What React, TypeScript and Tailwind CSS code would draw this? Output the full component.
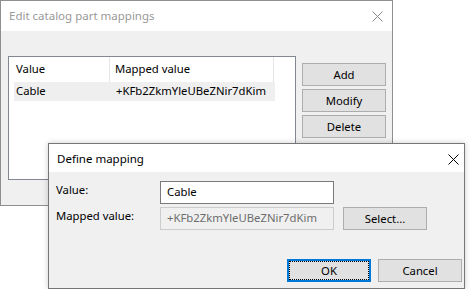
import React from "react";

function CloseIcon({ color }: { color: string }) {
  return (
    <svg width="11" height="11" viewBox="0 0 11 11" fill="none">
      <path d="M0.5 0.5 L10.5 10.5 M10.5 0.5 L0.5 10.5" stroke={color} strokeWidth="1" />
    </svg>
  );
}

function WinButton({ label, focused }: { label: string; focused?: boolean }) {
  if (focused) {
    return (
      <button className="relative w-[84px] h-[23px] bg-[#e1e1e1] border-2 border-[#0078d7] text-black leading-none">
        <span className="absolute inset-0 border border-dotted border-black" />
        {label}
      </button>
    );
  }
  return (
    <button className="w-[84px] h-[23px] bg-[#e1e1e1] border border-[#adadad] text-black leading-none">
      {label}
    </button>
  );
}

export default function App() {
  return (
    <div className="relative w-[470px] h-[289px] bg-white overflow-hidden text-[11.3px] font-['Noto_Sans',sans-serif] text-black">
      {/* back window */}
      <div className="absolute left-0 top-0 w-[393px] h-[206px] border border-[#8f8f8f] bg-[#f0f0f0] flex flex-col">
        <div className="h-[30px] bg-white flex items-center justify-between pl-2 pr-[9px] shrink-0">
          <span className="text-[#999999] text-[11.5px]">Edit catalog part mappings</span>
          <CloseIcon color="#8a8a8a" />
        </div>
        <div className="flex pl-[7px] pt-[25px]">
          <div className="w-[288px] h-[124px] border border-[#828790] bg-white pl-[5px]">
            <div className="flex h-[25px] items-center">
              <div className="w-[96px] h-full flex items-center pl-[2px] border-r border-[#e5e5e5]">Value</div>
              <div className="w-[164px] h-full flex items-center pl-[5px] border-r border-[#e5e5e5]">Mapped value</div>
            </div>
            <div className="flex h-[19px] items-center w-[261px] bg-[#efefef]">
              <div className="w-[96px] pl-[2px]">Cable</div>
              <div className="pl-[6px]">+KFb2ZkmYleUBeZNir7dKim</div>
            </div>
          </div>
          <div className="flex flex-col gap-[3px] ml-[6px] pt-[7px]">
            <WinButton label="Add" />
            <WinButton label="Modify" />
            <WinButton label="Delete" />
          </div>
        </div>
      </div>

      {/* front dialog */}
      <div className="absolute left-[48px] top-[143px] w-[417px] h-[146px] border border-[#767676] bg-[#f0f0f0] flex flex-col shadow-[0_0_6px_rgba(0,0,0,0.2)]">
        <div className="h-[28px] bg-white flex items-center justify-between pl-2 pr-[5px] pt-[2px] shrink-0">
          <span className="text-[11.5px]">Define mapping</span>
          <CloseIcon color="#000000" />
        </div>
        <div className="flex flex-col pl-[7px] pt-[9px]">
          <div className="flex items-start">
            <div className="w-[104px] pt-[1px]">Value:</div>
            <div className="w-[174px] h-[23px] border border-[#7a7a7a] bg-white flex items-center pl-[6px]">Cable</div>
          </div>
          <div className="flex items-start mt-[3px]">
            <div className="w-[104px] pt-[1px]">Mapped value:</div>
            <div className="w-[174px] h-[23px] border border-[#cccccc] bg-[#f0f0f0] flex items-center pl-[6px] text-[#6d6d6d]">
              +KFb2ZkmYleUBeZNir7dKim
            </div>
            <div className="ml-[9px]">
              <WinButton label="Select..." />
            </div>
          </div>
          <div className="flex justify-end gap-[7px] pr-[2px] mt-[29px]">
            <WinButton label="OK" focused />
            <WinButton label="Cancel" />
          </div>
        </div>
      </div>
    </div>
  );
}
